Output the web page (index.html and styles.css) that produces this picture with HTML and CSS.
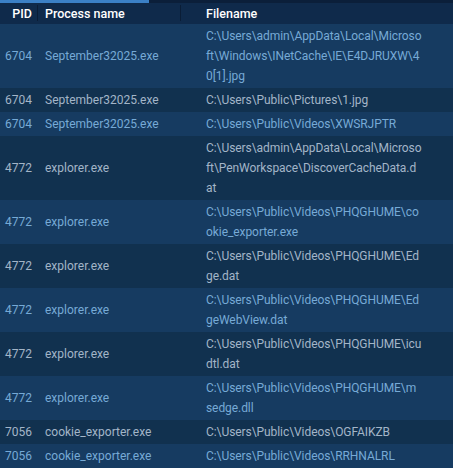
FILE: index.html
```html
<!DOCTYPE html>
<html lang="en">
<head>
  <meta charset="UTF-8">
  <title>Process files</title>
  <link rel="stylesheet" href="styles.css">
</head>
<body>
  <div class="progress"><div class="progress-bar" style="width: 149px"></div></div>

  <table class="files">
    <colgroup>
      <col class="col-pid">
      <col class="col-name">
      <col class="col-file">
    </colgroup>
    <thead>
      <tr>
        <th class="pid">PID</th>
        <th class="name">Process name</th>
        <th class="file">Filename</th>
      </tr>
    </thead>
    <tbody>
      <tr><td class="pid">6704</td><td>September32025.exe</td><td class="file">C:\Users\admin\AppData\Local\Microsoft\Windows\INetCache\IE\E4DJRUXW\40[1].jpg</td></tr>
      <tr><td class="pid">6704</td><td>September32025.exe</td><td class="file">C:\Users\Public\Pictures\1.jpg</td></tr>
      <tr><td class="pid">6704</td><td>September32025.exe</td><td class="file">C:\Users\Public\Videos\XWSRJPTR</td></tr>
      <tr><td class="pid">4772</td><td>explorer.exe</td><td class="file">C:\Users\admin\AppData\Local\Microsoft\PenWorkspace\DiscoverCacheData.dat</td></tr>
      <tr><td class="pid">4772</td><td>explorer.exe</td><td class="file">C:\Users\Public\Videos\PHQGHUME\cookie_exporter.exe</td></tr>
      <tr><td class="pid">4772</td><td>explorer.exe</td><td class="file">C:\Users\Public\Videos\PHQGHUME\Edge.dat</td></tr>
      <tr><td class="pid">4772</td><td>explorer.exe</td><td class="file">C:\Users\Public\Videos\PHQGHUME\EdgeWebView.dat</td></tr>
      <tr><td class="pid">4772</td><td>explorer.exe</td><td class="file">C:\Users\Public\Videos\PHQGHUME\icudtl.dat</td></tr>
      <tr><td class="pid">4772</td><td>explorer.exe</td><td class="file">C:\Users\Public\Videos\PHQGHUME\msedge.dll</td></tr>
      <tr><td class="pid">7056</td><td>cookie_exporter.exe</td><td class="file">C:\Users\Public\Videos\OGFAIKZB</td></tr>
      <tr><td class="pid">7056</td><td>cookie_exporter.exe</td><td class="file">C:\Users\Public\Videos\RRHNALRL</td></tr>
    </tbody>
  </table>
</body>
</html>
```
FILE: styles.css
```css
body {
  margin: 0;
  background: #11304f;
  font-family: Roboto, sans-serif;
  font-size: 12px;
  color: #a3b5c8;
}

.progress {
  height: 3px;
  background: #0b1f3a;
}

.progress-bar {
  height: 3px;
  background: #3b80c6;
}

.files {
  width: 100%;
  border-collapse: collapse;
  table-layout: fixed;
}

.col-pid {
  width: 38px;
}

.col-name {
  width: 143px;
}

th, td {
  padding: 2px 7px;
  line-height: 20px;
  text-align: left;
  vertical-align: middle;
}

thead {
  background: #0f2a4b;
}

th {
  position: relative;
  line-height: 17px;
  color: #ffffff;
  font-weight: 500;
  font-size: 12.5px;
}

th.pid::after, th.name::after {
  content: "";
  position: absolute;
  right: 0;
  top: 2px;
  bottom: 3px;
  width: 1px;
  background: #0a1d36;
}

.pid {
  text-align: right;
  padding-right: 6px;
  padding-left: 0;
}

.file {
  padding-left: 25px;
  padding-right: 31px;
  letter-spacing: -0.07px;
  word-break: break-all;
}

th.file {
  letter-spacing: 0;
}

tbody tr:nth-child(odd) {
  background: #163b61;
  color: #76aad6;
}

tbody tr:nth-child(even) {
  background: #11314f;
  color: #a3b5c8;
}
```
